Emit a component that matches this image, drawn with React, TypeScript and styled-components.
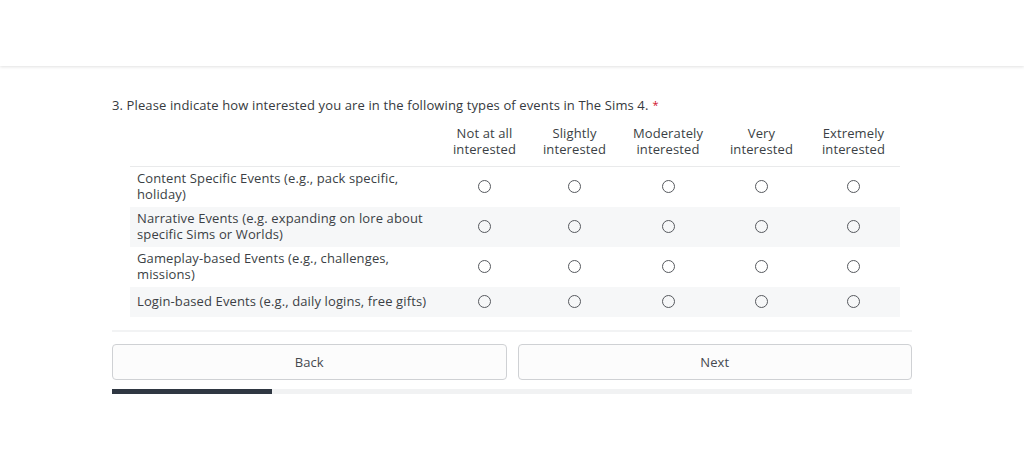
import React from "react";
import styled, { createGlobalStyle } from "styled-components";

const Global = createGlobalStyle`
  html, body { margin: 0; padding: 0; background: #ffffff; }
  body { font-family: "Open Sans", "Noto Sans", Arial, sans-serif; color: #3b3f45; letter-spacing: 0.12px; }
`;

const TopBar = styled.header`
  height: 66px;
  background: #ffffff;
  box-shadow: 0 1px 3px rgba(0, 0, 0, 0.12);
`;

const Main = styled.main`
  width: 800px;
  margin: 0 auto;
  padding-top: 31px;
`;

const Question = styled.div`
  font-size: 13px;
  line-height: 16px;
  color: #363a40;
  margin-bottom: 10px;
`;

const Star = styled.span`
  color: #d0112b;
  margin-left: 4px;
  font-size: 11px;
  vertical-align: top;
`;

const Grid = styled.div`
  margin: 0 12px 0 18px;
  display: grid;
  grid-template-columns: 310px 89px 91px 96px 91px 93px;
`;

const HeaderRow = styled.div`
  display: contents;
`;

const HeadCell = styled.div`
  font-size: 13px;
  line-height: 16px;
  text-align: center;
  padding: 2px 0 9px;
  border-bottom: 1px solid #e9eaeb;
  color: #3b3f45;
`;

const Row = styled.div<{ $alt: boolean }>`
  display: contents;
  & > div {
    background: ${(p) => (p.$alt ? "#f6f7f8" : "#ffffff")};
  }
`;

const Label = styled.div`
  font-size: 13px;
  line-height: 16px;
  padding: 3px 7px 5px;
  display: flex;
  align-items: center;
  color: #3b3f45;
`;

const RadioCell = styled.div`
  display: flex;
  align-items: center;
  justify-content: center;
  padding: 8px 0 9px;
`;

const Radio = styled.span`
  width: 11px;
  height: 11px;
  border: 1.6px solid #56595e;
  border-radius: 50%;
  display: block;
`;

const Divider = styled.div`
  height: 2px;
  background: #f2f3f4;
  margin-top: 13px;
`;

const Buttons = styled.div`
  display: flex;
  gap: 11px;
  margin-top: 12px;
`;

const Button = styled.button`
  flex: 1;
  height: 36px;
  border: 1px solid #cfd1d4;
  border-radius: 4px;
  background: #fcfcfc;
  font-family: inherit;
  letter-spacing: inherit;
  font-size: 13px;
  color: #45494f;
  padding: 0 0 1px;
`;

const Track = styled.div`
  margin-top: 9px;
  height: 5px;
  background: #f1f2f3;
`;

const Fill = styled.div`
  height: 100%;
  background: #2f3742;
`;

const columns = [
  ["Not at all", "interested"],
  ["Slightly", "interested"],
  ["Moderately", "interested"],
  ["Very", "interested"],
  ["Extremely", "interested"],
];

const rows = [
  ["Content Specific Events (e.g., pack specific,", "holiday)"],
  ["Narrative Events (e.g. expanding on lore about", "specific Sims or Worlds)"],
  ["Gameplay-based Events (e.g., challenges,", "missions)"],
  ["Login-based Events (e.g., daily logins, free gifts)"],
];

export default function App() {
  const progress = 20;
  return (
    <>
      <Global />
      <TopBar />
      <Main>
        <Question>
          3. Please indicate how interested you are in the following types of events in The Sims 4.
          <Star>*</Star>
        </Question>
        <Grid>
          <HeaderRow>
            <HeadCell />
            {columns.map((c) => (
              <HeadCell key={c[0]}>
                {c[0]}
                <br />
                {c[1]}
              </HeadCell>
            ))}
          </HeaderRow>
          {rows.map((r, i) => (
            <Row key={i} $alt={i % 2 === 1}>
              <Label>
                <span>
                  {r[0]}
                  {r[1] && (
                    <>
                      <br />
                      {r[1]}
                    </>
                  )}
                </span>
              </Label>
              {columns.map((c) => (
                <RadioCell key={c[0]}>
                  <Radio />
                </RadioCell>
              ))}
            </Row>
          ))}
        </Grid>
        <Divider />
        <Buttons>
          <Button>Back</Button>
          <Button>Next</Button>
        </Buttons>
        <Track>
          <Fill style={{ width: `${progress}%` }} />
        </Track>
      </Main>
    </>
  );
}
